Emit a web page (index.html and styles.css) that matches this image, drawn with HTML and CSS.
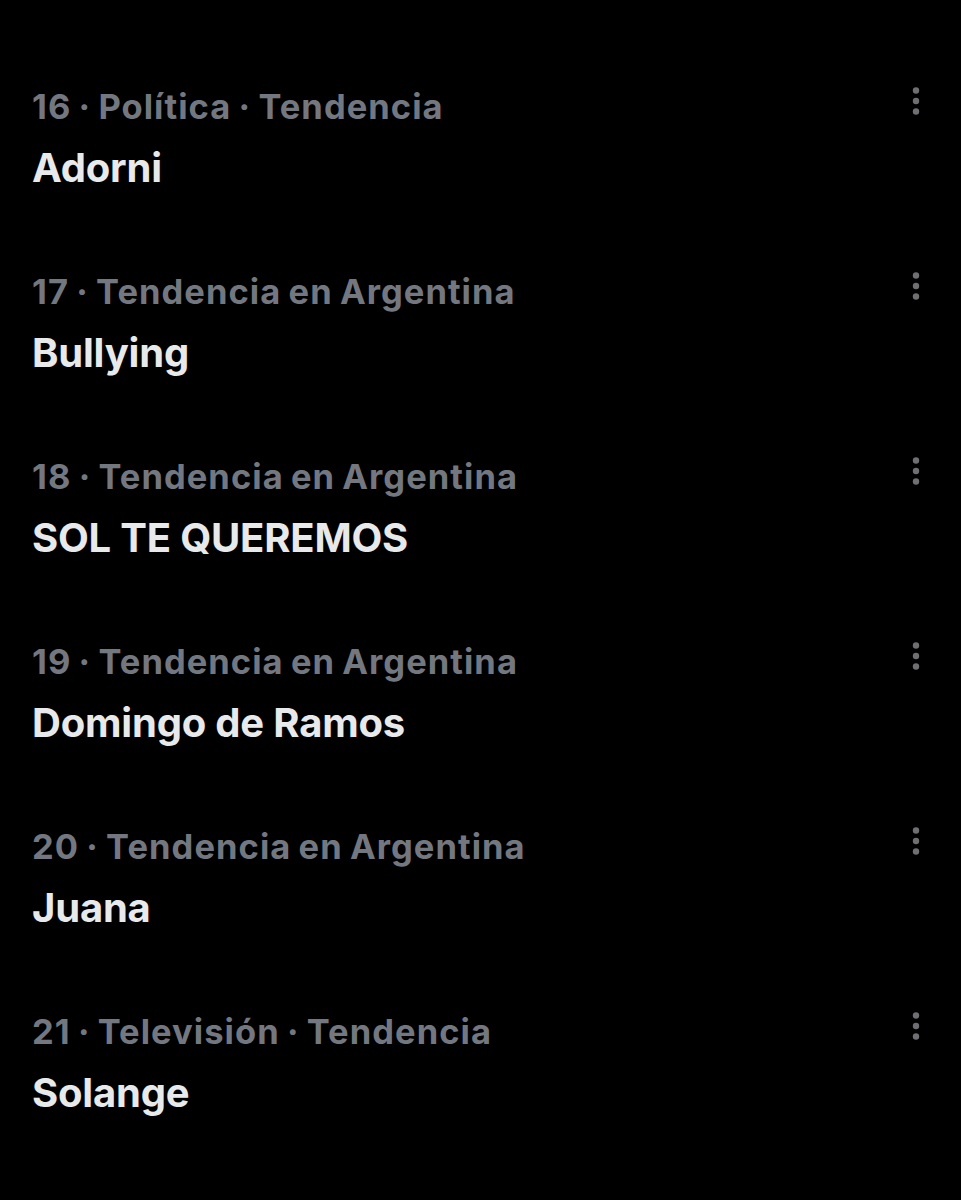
FILE: index.html
```html
<!DOCTYPE html>
<html lang="es">
<head>
<meta charset="utf-8">
<title>Tendencias</title>
<link rel="stylesheet" href="styles.css">
</head>
<body>
<ul class="trends">
  <li class="trend">
    <div class="trend-body">
      <div class="meta">16 · Política · Tendencia</div>
      <div class="title">Adorni</div>
    </div>
    <div class="more"><svg viewBox="0 0 36 36" width="36" height="36"><circle cx="18" cy="7.5" r="3.2"/><circle cx="18" cy="18" r="3.2"/><circle cx="18" cy="28.5" r="3.2"/></svg></div>
  </li>
  <li class="trend">
    <div class="trend-body">
      <div class="meta">17 · Tendencia en Argentina</div>
      <div class="title">Bullying</div>
    </div>
    <div class="more"><svg viewBox="0 0 36 36" width="36" height="36"><circle cx="18" cy="7.5" r="3.2"/><circle cx="18" cy="18" r="3.2"/><circle cx="18" cy="28.5" r="3.2"/></svg></div>
  </li>
  <li class="trend">
    <div class="trend-body">
      <div class="meta">18 · Tendencia en Argentina</div>
      <div class="title">SOL TE QUEREMOS</div>
    </div>
    <div class="more"><svg viewBox="0 0 36 36" width="36" height="36"><circle cx="18" cy="7.5" r="3.2"/><circle cx="18" cy="18" r="3.2"/><circle cx="18" cy="28.5" r="3.2"/></svg></div>
  </li>
  <li class="trend">
    <div class="trend-body">
      <div class="meta">19 · Tendencia en Argentina</div>
      <div class="title">Domingo de Ramos</div>
    </div>
    <div class="more"><svg viewBox="0 0 36 36" width="36" height="36"><circle cx="18" cy="7.5" r="3.2"/><circle cx="18" cy="18" r="3.2"/><circle cx="18" cy="28.5" r="3.2"/></svg></div>
  </li>
  <li class="trend">
    <div class="trend-body">
      <div class="meta">20 · Tendencia en Argentina</div>
      <div class="title">Juana</div>
    </div>
    <div class="more"><svg viewBox="0 0 36 36" width="36" height="36"><circle cx="18" cy="7.5" r="3.2"/><circle cx="18" cy="18" r="3.2"/><circle cx="18" cy="28.5" r="3.2"/></svg></div>
  </li>
  <li class="trend">
    <div class="trend-body">
      <div class="meta">21 · Televisión · Tendencia</div>
      <div class="title">Solange</div>
    </div>
    <div class="more"><svg viewBox="0 0 36 36" width="36" height="36"><circle cx="18" cy="7.5" r="3.2"/><circle cx="18" cy="18" r="3.2"/><circle cx="18" cy="28.5" r="3.2"/></svg></div>
  </li>
</ul>
</body>
</html>
```
FILE: styles.css
```css
html, body {
  margin: 0;
  padding: 0;
  background: #000;
}
body {
  font-family: Inter, "Noto Sans", "Liberation Sans", sans-serif;
  height: 1200px;
  overflow: hidden;
}
.trends {
  list-style: none;
  margin: 0;
  padding: 56px 0 0 32px;
}
.trend {
  display: flex;
  align-items: flex-start;
  height: 185px;
  box-sizing: border-box;
  padding: 30px 27px 0 0;
}
.trend-body {
  flex: 1;
  display: flex;
  flex-direction: column;
  gap: 16px;
}
.meta {
  font-size: 34.5px;
  font-weight: 700;
  line-height: 42px;
  color: #737880;
  letter-spacing: 1.05px;
  word-spacing: -2px;
}
.title {
  font-size: 40px;
  font-weight: 700;
  line-height: 48px;
  color: #e7e9ea;
  letter-spacing: -0.2px;
}
.more {
  width: 36px;
  height: 36px;
  margin-top: -3px;
}
.more svg {
  display: block;
  fill: #6f6f73;
}
```
